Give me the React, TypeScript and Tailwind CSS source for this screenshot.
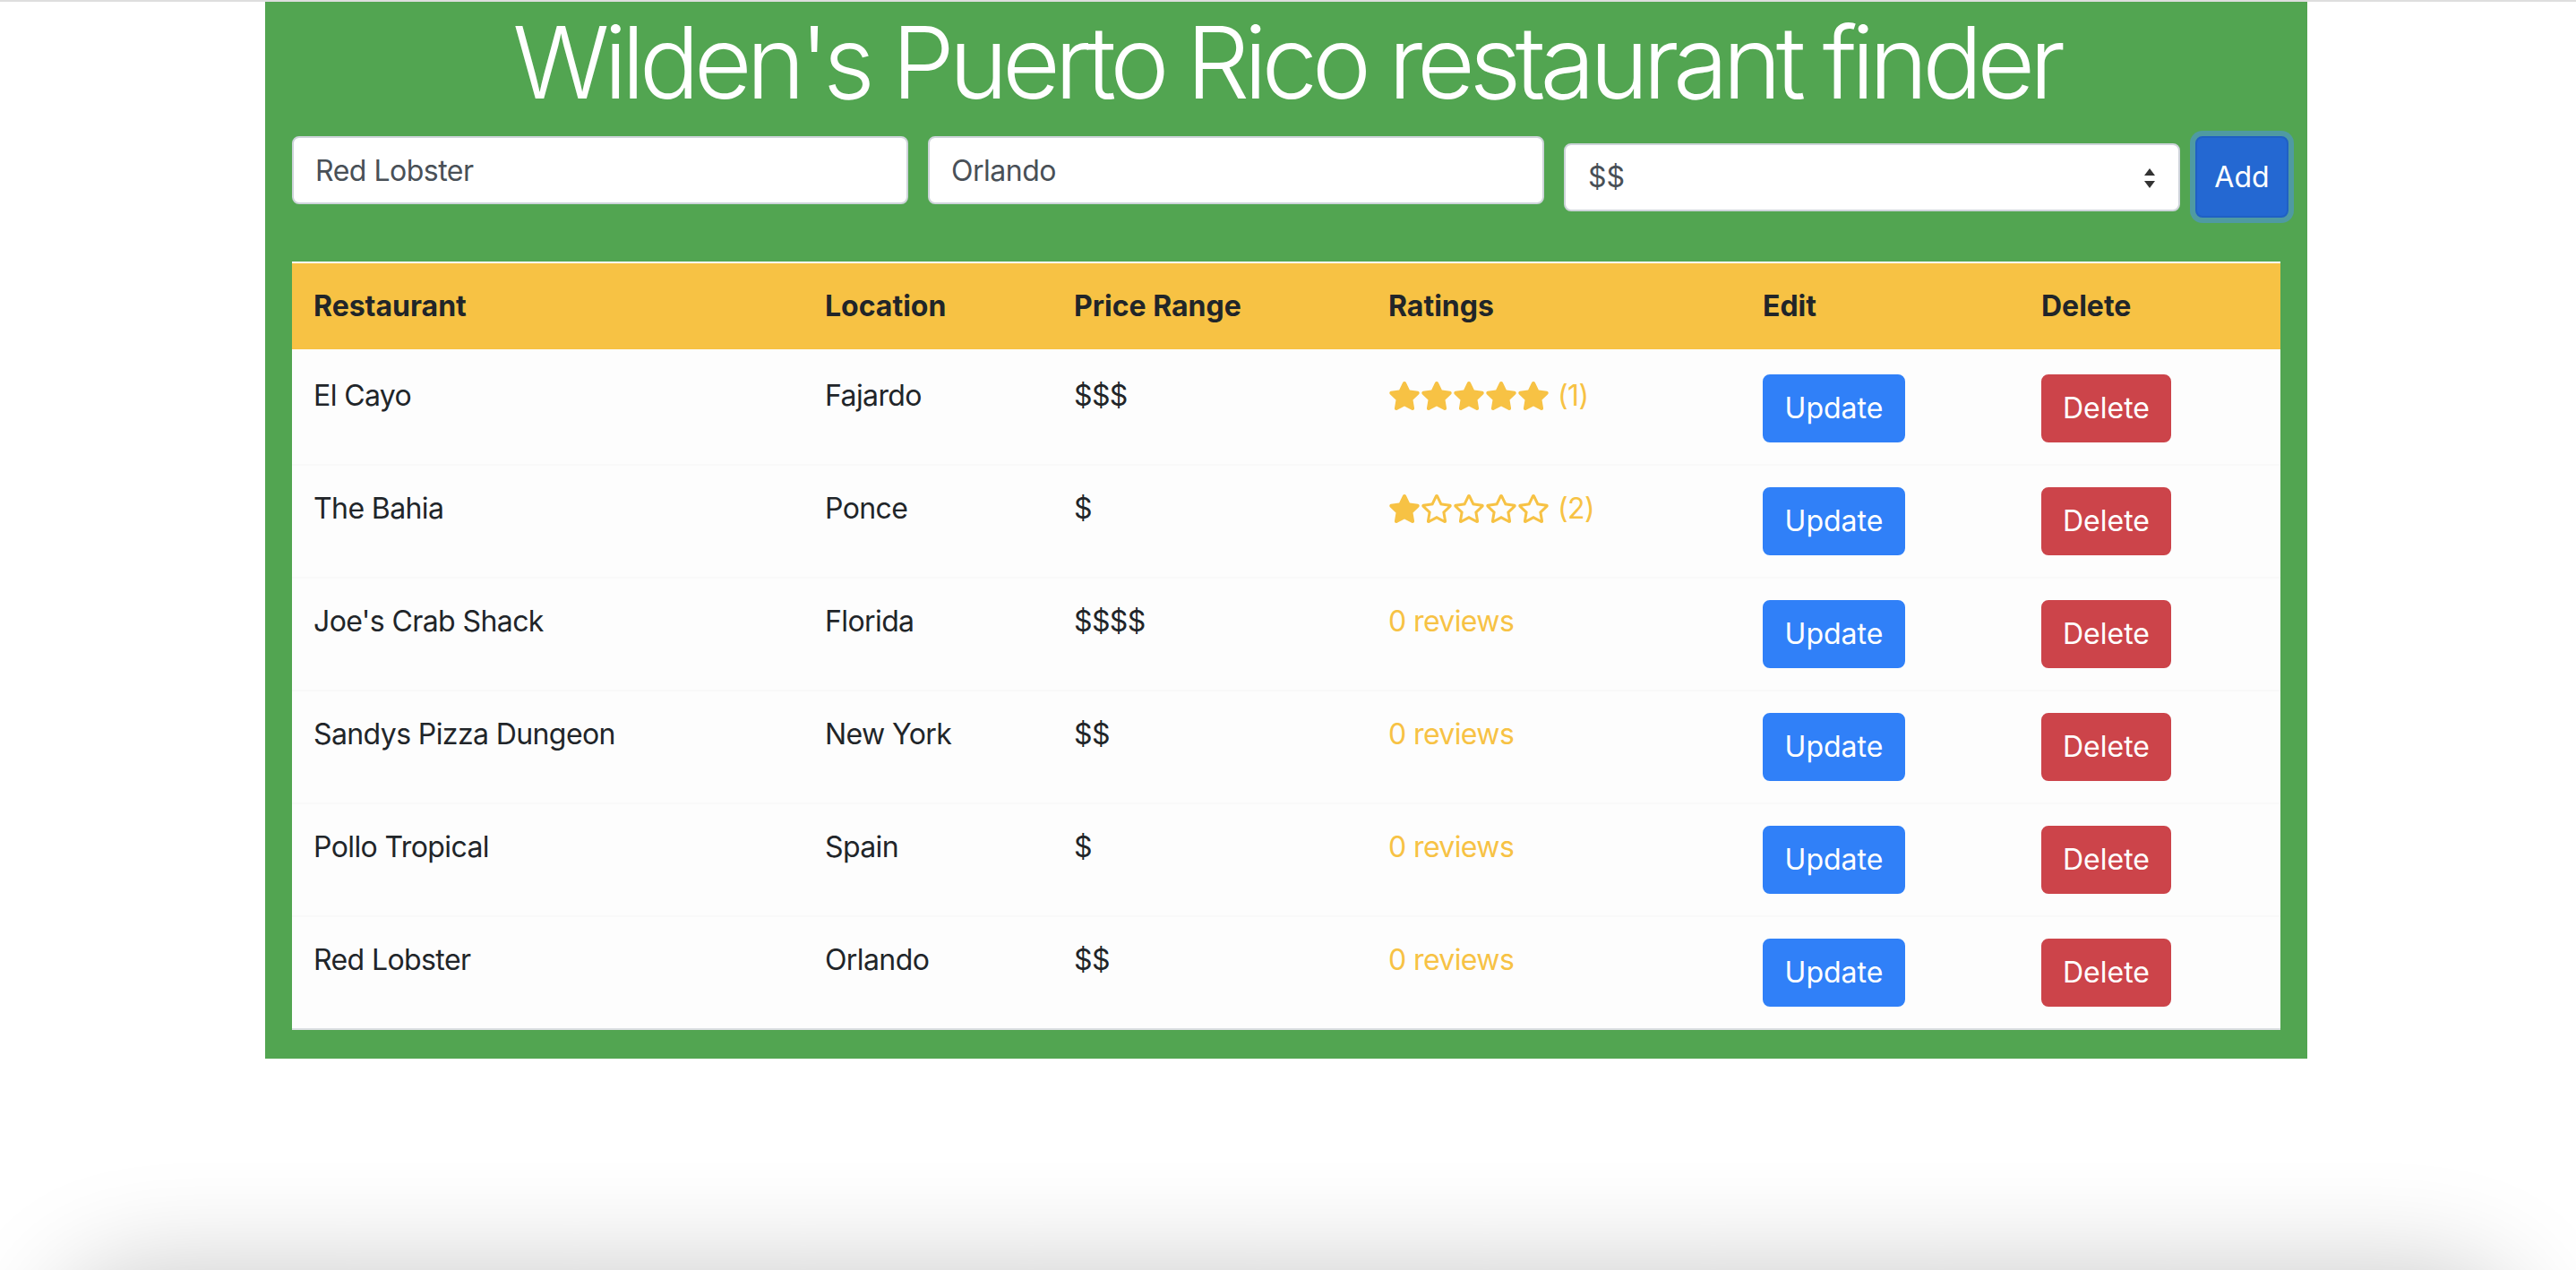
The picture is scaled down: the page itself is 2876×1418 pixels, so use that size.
import React from 'react';
import { FaStar, FaRegStar } from 'react-icons/fa';

type Restaurant = {
  name: string;
  location: string;
  price: number;
  rating?: number;
  count?: number;
};

const restaurants: Restaurant[] = [
  { name: 'El Cayo', location: 'Fajardo', price: 3, rating: 5, count: 1 },
  { name: 'The Bahia', location: 'Ponce', price: 1, rating: 1, count: 2 },
  { name: "Joe's Crab Shack", location: 'Florida', price: 4 },
  { name: 'Sandys Pizza Dungeon', location: 'New York', price: 2 },
  { name: 'Pollo Tropical', location: 'Spain', price: 1 },
  { name: 'Red Lobster', location: 'Orlando', price: 2 },
];

function StarRating({ rating, count }: { rating?: number; count?: number }) {
  if (!count) {
    return <span className="text-[#f7c244]">0 reviews</span>;
  }
  return (
    <span className="flex items-center text-[#f7c244]">
      {[1, 2, 3, 4, 5].map((n) =>
        n <= (rating ?? 0) ? (
          <FaStar key={n} className="h-[32px] w-[36px]" />
        ) : (
          <FaRegStar key={n} className="h-[32px] w-[36px]" />
        )
      )}
      <span className="ml-[9px]">({count})</span>
    </span>
  );
}

export default function App() {
  return (
    <div className="relative min-h-screen overflow-hidden bg-white font-['Inter','Noto_Sans',sans-serif]">
      <div className="h-[2px] w-full bg-[#dedede]" />

      <div className="ml-[296px] w-[2280px] bg-[#52a551] px-[30px]">
        <h1 className="text-center text-[112px] font-light leading-[1.2] tracking-[-6.4px] text-white">
          Wilden's Puerto Rico restaurant finder
        </h1>

        {/* Add restaurant form */}
        <div className="mt-[16px] flex items-start">
          <input
            defaultValue="Red Lobster"
            className="h-[76px] w-[688px] shrink-0 rounded-[8px] border-2 border-[#ced4da] bg-white px-[24px] text-[32px] tracking-[-0.5px] text-[#495057] outline-none"
          />
          <input
            defaultValue="Orlando"
            className="ml-[22px] h-[76px] w-[688px] shrink-0 rounded-[8px] border-2 border-[#ced4da] bg-white px-[24px] text-[32px] tracking-[-0.5px] text-[#495057] outline-none"
          />
          <div className="relative ml-[22px] mt-[8px] h-[76px] w-[688px] shrink-0">
            <select
              defaultValue="2"
              className="h-full w-full appearance-none rounded-[8px] border-2 border-[#ced4da] bg-white pl-[25px] text-[32px] text-[#495057] outline-none"
            >
              <option value="1">$</option>
              <option value="2">$$</option>
              <option value="3">$$$</option>
              <option value="4">$$$$</option>
            </select>
            <svg
              viewBox="0 0 16 22"
              className="pointer-events-none absolute right-[26px] top-[28px] h-[22px] w-[16px]"
            >
              <path d="M8 0 L14 8 L2 8 Z" fill="#333" />
              <path d="M8 22 L14 14 L2 14 Z" fill="#333" />
            </svg>
          </div>
          <button className="ml-[17px] h-[91px] w-[104px] shrink-0 rounded-[8px] border-2 border-[#1f60c4] bg-[#2468d2] text-[32px] leading-[48px] text-white shadow-[0_0_0_6px_#4f9aa2]">
            Add
          </button>
        </div>

        {/* Restaurant list */}
        <table className="mt-[49px] mb-[32px] w-[2220px] table-fixed border-separate border-spacing-0 text-[32px] leading-[48px] text-[#212529]">
          <colgroup>
            <col className="w-[571px]" />
            <col className="w-[278px]" />
            <col className="w-[351px]" />
            <col className="w-[418px]" />
            <col className="w-[311px]" />
            <col className="w-[291px]" />
          </colgroup>
          <thead>
            <tr className="bg-[#f7c244]">
              {['Restaurant', 'Location', 'Price Range', 'Ratings', 'Edit', 'Delete'].map((h) => (
                <th
                  key={h}
                  className="border-t-2 border-b-4 border-t-white border-b-[#fdfdfd] p-[24px] text-left font-bold"
                >
                  {h}
                </th>
              ))}
            </tr>
          </thead>
          <tbody>
            {restaurants.map((r, i) => {
              const border =
                (i === 0 ? '' : 'border-t-2 border-t-[#f9f9f9] ') +
                (i === restaurants.length - 1 ? 'border-b-2 border-b-[#dcdfe3] ' : '');
              return (
                <tr key={r.name} className="bg-[#fdfdfd]">
                  <td className={border + 'p-[24px] align-top tracking-[-0.6px]'}>{r.name}</td>
                  <td className={border + 'p-[24px] align-top tracking-[-0.6px]'}>{r.location}</td>
                  <td className={border + 'p-[24px] align-top tracking-[-0.6px]'}>{'$'.repeat(r.price)}</td>
                  <td className={border + 'p-[24px] align-top tracking-[-0.6px]'}>
                    <StarRating rating={r.rating} count={r.count} />
                  </td>
                  <td className={border + 'p-[24px] align-top'}>
                    <button className="h-[76px] w-[159px] rounded-[8px] border-2 border-[#3080f8] bg-[#3080f8] text-center text-white">
                      Update
                    </button>
                  </td>
                  <td className={border + 'p-[24px] align-top'}>
                    <button className="h-[76px] w-[145px] rounded-[8px] border-2 border-[#cc444a] bg-[#cc444a] text-center text-white">
                      Delete
                    </button>
                  </td>
                </tr>
              );
            })}
          </tbody>
        </table>
        <div className="h-px -mt-px" />
      </div>

      {/* window shadow along the bottom edge */}
      <div className="pointer-events-none fixed bottom-[-200px] left-[60px] right-[60px] h-[200px] rounded-[100px] shadow-[0_0_120px_0_rgba(0,0,0,0.22)]" />
    </div>
  );
}
